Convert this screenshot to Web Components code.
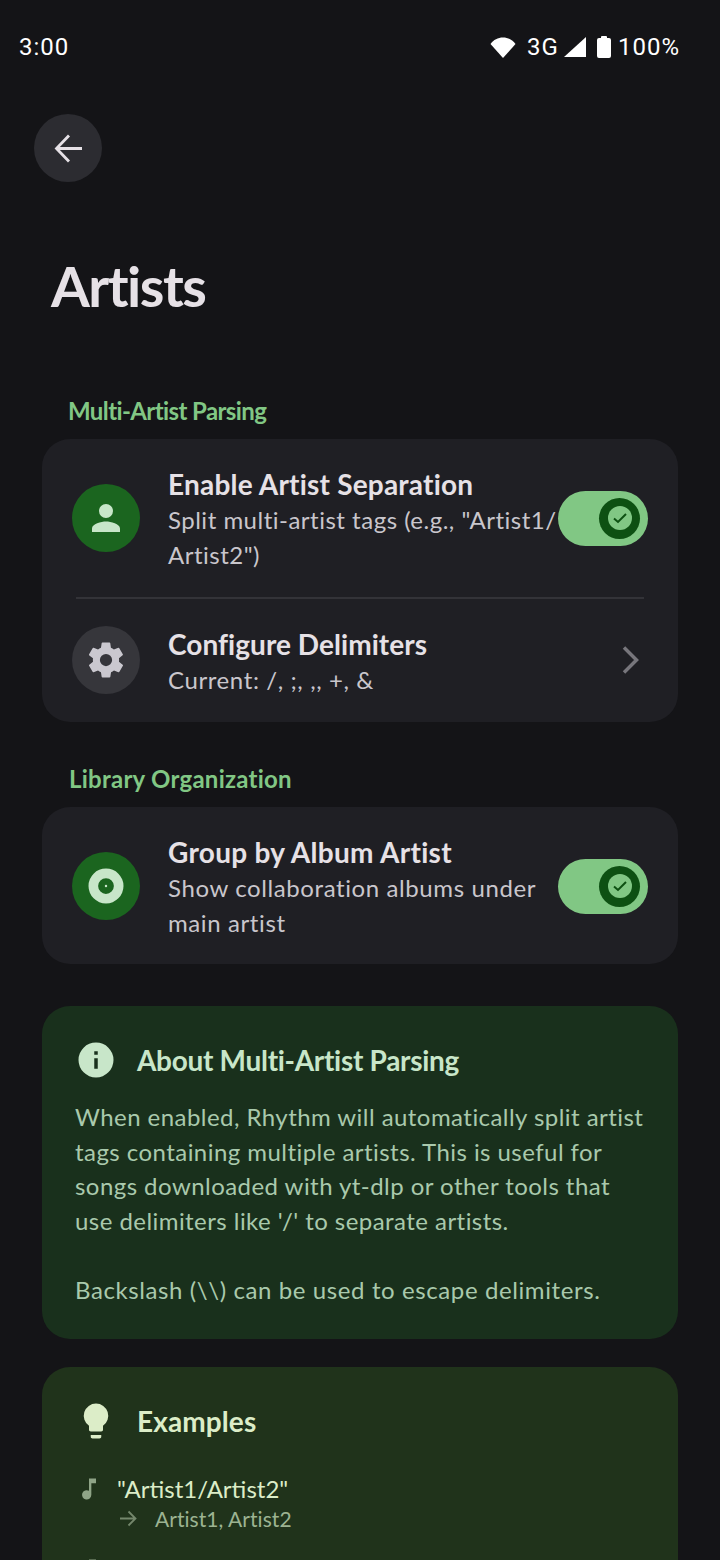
<!DOCTYPE html>
<html>
<head>
<meta charset="utf-8">
<style>
  html, body { margin: 0; padding: 0; background: #141417; }
  body { width: 720px; height: 1560px; overflow: hidden; font-family: Lato, "Noto Sans", sans-serif; }
</style>
</head>
<body>
<settings-page>
  <status-bar></status-bar>
  <back-button></back-button>
  <page-title>Artists</page-title>

  <section-label style="--label-left: 68px; --label-top: 76px; --label-ls: -.6px">Multi-Artist Parsing</section-label>
  <settings-card>
    <setting-row style="--row-pad: 27px 0 25px; --icon-up: 2px; --sub-ls: .5px" tone="green" icon="person" toggle title="Enable Artist Separation"
      subtitle="Split multi-artist tags (e.g., &quot;Artist1/&lt;wbr&gt;Artist2&quot;)"></setting-row>
    <div class="divider" style="height:2px;background:#333338;margin:0 4px"></div>
    <setting-row style="--row-pad: 27px 0 25px; --icon-up: 3px; --title-ls: .05px" tone="grey" icon="gear" chevron title="Configure Delimiters" subtitle="Current: /, ;, ,, +, &amp;"></setting-row>
  </settings-card>

  <section-label style="--label-left: 69px; --label-top: 41px; --label-ls: .25px">Library Organization</section-label>
  <settings-card>
    <setting-row style="--row-pad: 27px 0 24px; --icon-up: 2px; --title-ls: .3px" tone="green" icon="album" toggle title="Group by Album Artist"
      subtitle="Show collaboration albums under main artist"></setting-row>
  </settings-card>

  <info-card style="--card-bg: #19301c; --card-top: 42px; --head-color: #c8e6c9; --head-gap: 19px; --head-ls: -.3px; --text-color: #a9c9ac" icon="info" heading="About Multi-Artist Parsing">
    <p style="letter-spacing:.45px">When enabled, Rhythm will automatically split artist tags containing multiple artists. This is useful for songs downloaded with yt-dlp or other tools that use delimiters like '/' to separate artists.</p>
    <p>Backslash (\\) can be used to escape delimiters.</p>
  </info-card>

  <info-card style="--card-bg: #20331b; --card-top: 28px; --head-color: #dcedc8; --head-gap: 31px; --head-ls: .1px" icon="bulb" heading="Examples">
    <example-row from="&quot;Artist1/Artist2&quot;" to="Artist1, Artist2"></example-row>
    <example-row from="&quot;Artist1 &amp; Artist2&quot;" to="Artist1, Artist2"></example-row>
  </info-card>
</settings-page>

<script>
const ICONS = {
  person: '<path d="M12 12a4 4 0 1 0 0-8 4 4 0 0 0 0 8zm0 2c-2.7 0-8 1.300-8 4v2h16v-2c0-2.700-5.300-4-8-4z"/>',
  gear: '<path d="M19.400 13c.04-.33.06-.66.06-1s-.02-.67-.07-1l2.100-1.650a.5.5 0 0 0 .12-.64l-2-3.460a.5.5 0 0 0-.61-.22l-2.490 1a7.300 7.300 0 0 0-1.690-.98l-.38-2.650A.49.49 0 0 0 14 2h-4a.49.49 0 0 0-.49.42l-.38 2.650c-.61.25-1.170.59-1.690.98l-2.490-1a.5.5 0 0 0-.61.22l-2 3.460a.5.5 0 0 0 .12.64L4.570 11c-.05.33-.07.67-.07 1s.02.67.07 1l-2.110 1.650a.5.5 0 0 0-.12.64l2 3.460c.12.22.39.3.61.22l2.490-1c.52.39 1.080.73 1.690.98l.38 2.650c.06.24.27.42.49.42h4c.25 0 .46-.18.49-.42l.38-2.650c.61-.25 1.170-.59 1.690-.98l2.490 1c.23.09.49 0 .61-.22l2-3.460a.5.5 0 0 0-.12-.64L19.400 13zM12 15.500a3.500 3.500 0 1 1 0-7 3.500 3.500 0 0 1 0 7z"/>',
  album: '<path fill-rule="evenodd" d="M12 2a10 10 0 1 0 0 20 10 10 0 0 0 0-20zm0 5.500a4.500 4.500 0 1 1 0 9 4.500 4.500 0 0 1 0-9zm0 3.800a.7.7 0 1 0 0 1.400.7.7 0 0 0 0-1.400z"/>',
  info: '<path d="M12 2a10 10 0 1 0 0 20 10 10 0 0 0 0-20zm1 15h-2v-6h2v6zm0-8h-2V7h2v2z"/>',
  bulb: '<path d="M9 21c0 .55.45 1 1 1h4c.55 0 1-.45 1-1v-1H9v1zm3-19a7 7 0 0 0-4 12.740V17c0 .55.45 1 1 1h6c.55 0 1-.45 1-1v-2.260A7 7 0 0 0 12 2z"/>',
  note: '<path d="M12 3v10.550A4 4 0 1 0 14 17V7h4V3h-6z"/>'
};

class SettingsPage extends HTMLElement {
  constructor() {
    super();
    this.attachShadow({ mode: 'open' }).innerHTML = `
      <style>:host { display: block; padding: 0 42px; height: 1560px; overflow: hidden; }</style>
      <slot></slot>`;
  }
}

class StatusBar extends HTMLElement {
  constructor() {
    super();
    this.attachShadow({ mode: 'open' }).innerHTML = `
      <style>
        :host { display: flex; align-items: center; justify-content: space-between; height: 24px; margin: 35px -2px 0 -23px;
          color: #fff; font: 400 24px Roboto, sans-serif; letter-spacing: 1px; }
        .right { display: flex; align-items: center; }
        svg { display: block; fill: #fff; }
      </style>
      <span>3:00</span>
      <span class="right">
        <svg width="26" height="21" viewBox="0 0 26 21" style="margin-right:11px"><path d="M13 21 .5 7C3.500 2.800 8 .5 13 .5S22.500 2.800 25.500 7z"/></svg>
        <span>3G</span>
        <svg width="22" height="20" viewBox="0 0 22 20" style="margin:0 11px 0 5px"><path d="M22 0v20H0z"/></svg>
        <svg width="14" height="22" viewBox="0 0 14 22" style="margin-right:7px"><path d="M4 2V1a1 1 0 0 1 1-1h4a1 1 0 0 1 1 1v1h2a2 2 0 0 1 2 2v16a2 2 0 0 1-2 2H2a2 2 0 0 1-2-2V4a2 2 0 0 1 2-2z"/></svg>
        <span>100%</span>
      </span>`;
  }
}

class BackButton extends HTMLElement {
  constructor() {
    super();
    this.attachShadow({ mode: 'open' }).innerHTML = `
      <style>
        :host { display: flex; align-items: center; justify-content: center; width: 68px; height: 68px; margin: 55px 0 0 -8px;
          border-radius: 50%; background: #2c2c31; }
        svg { fill: none; stroke: #e6e1e6; stroke-width: 2.800; }
      </style>
      <svg width="32" height="32" viewBox="0 0 32 32"><path d="M30 16.500H5M17 3.500 4.500 16.500 17 29.500"/></svg>`;
  }
}

class PageTitle extends HTMLElement {
  constructor() {
    super();
    this.attachShadow({ mode: 'open' }).innerHTML = `
      <style>:host { display: block; margin: 71px 0 0 9px; color: #e6e1e6; font-size: 56px; line-height: 66px; font-weight: 700; letter-spacing: -1.500px; }</style>
      <slot></slot>`;
  }
}

class SectionLabel extends HTMLElement {
  constructor() {
    super();
    this.attachShadow({ mode: 'open' }).innerHTML = `
      <style>
        :host { display: block; margin: var(--label-top) 0 12px calc(var(--label-left) - 42px); color: #81c784;
          font-size: 24px; line-height: 32px; font-weight: 700; letter-spacing: var(--label-ls); }
      </style>
      <slot></slot>`;
  }
}

class SettingsCard extends HTMLElement {
  constructor() {
    super();
    this.attachShadow({ mode: 'open' }).innerHTML = `
      <style>
        :host { display: block; background: #1f1f24; border-radius: 28px; padding: 0 30px; }
      </style>
      <slot></slot>`;
  }
}

class SettingRow extends HTMLElement {
  connectedCallback() {
    if (this.shadowRoot) return;
    const tone = this.getAttribute('tone');
    const bg = tone === 'green' ? '#1b651f' : '#36363b';
    const fg = tone === 'green' ? '#c8e6c9' : '#cac8cf';
    let end = '';
    if (this.hasAttribute('toggle')) end = '<toggle-switch></toggle-switch>';
    if (this.hasAttribute('chevron')) end = `<svg class="chev" width="18" height="30" viewBox="0 0 18 30"><path d="M2 2.500 14.500 15 2 27.500" fill="none" stroke="#77767c" stroke-width="3.500"/></svg>`;
    this.attachShadow({ mode: 'open' }).innerHTML = `
      <style>
        :host { display: flex; align-items: center; padding: var(--row-pad); }
        .icon { flex: none; width: 68px; height: 68px; border-radius: 50%; background: ${bg}; display: flex; align-items: center; justify-content: center; margin: 0 28px var(--icon-up, 0) 0; }
        .icon svg { fill: ${fg}; }
        .text { flex: 1; min-width: 0; }
        .title { color: #e6e1e6; font-size: 28px; line-height: 36px; font-weight: 700; letter-spacing: var(--title-ls, .2px); }
        .sub { color: #c9c6cc; font-size: 24px; line-height: 35px; letter-spacing: var(--sub-ls, .6px); }
        .chev { flex: none; margin: 0 8px var(--icon-up, 0) 0; }
        toggle-switch { margin-bottom: var(--icon-up, 0); }
      </style>
      <div class="icon"><svg width="42" height="42" viewBox="0 0 24 24">${ICONS[this.getAttribute('icon')]}</svg></div>
      <div class="text">
        <div class="title">${this.getAttribute('title')}</div>
        <div class="sub">${this.getAttribute('subtitle')}</div>
      </div>
      ${end}`;
  }
}

class ToggleSwitch extends HTMLElement {
  constructor() {
    super();
    this.attachShadow({ mode: 'open' }).innerHTML = `
      <style>
        :host { flex: none; display: flex; align-items: center; justify-content: flex-end; width: 90px; height: 55px; box-sizing: border-box; padding-right: 8px; border-radius: 28px; background: #81c784; }
        .thumb { width: 41px; height: 41px; border-radius: 50%; background: #0d5012; display: flex; align-items: center; justify-content: center; }
        .inner { width: 24px; height: 24px; border-radius: 50%; background: #81c784; display: flex; align-items: center; justify-content: center; }
        svg { fill: none; stroke: #0d5012; stroke-width: 2; }
      </style>
      <div class="thumb"><div class="inner"><svg width="16" height="16" viewBox="0 0 16 16"><path d="M2 8.500 6 12l8-8"/></svg></div></div>`;
  }
}

class InfoCard extends HTMLElement {
  constructor() {
    super();
    const icon = this.getAttribute('icon');
    this.attachShadow({ mode: 'open' }).innerHTML = `
      <style>
        :host { display: block; margin-top: var(--card-top); background: var(--card-bg); border-radius: 28px; padding: 33px 33px 31px; }
        .head { display: flex; align-items: center; gap: 20px; color: var(--head-color); margin-bottom: var(--head-gap); }
        .head svg { fill: var(--head-color); flex: none; }
        h2 { margin: 0; font-size: 28px; line-height: 42px; font-weight: 700; letter-spacing: var(--head-ls); }
        ::slotted(p) { margin: 0 0 35px; color: var(--text-color); font-size: 24px; line-height: 34.600px; letter-spacing: .6px; }
        ::slotted(p:last-child) { margin-bottom: 0; }
      </style>
      <div class="head"><svg width="42" height="42" viewBox="0 0 24 24">${ICONS[icon]}</svg><h2>${this.getAttribute('heading')}</h2></div>
      <slot></slot>`;
  }
}

class ExampleRow extends HTMLElement {
  constructor() {
    super();
    this.attachShadow({ mode: 'open' }).innerHTML = `
      <style>
        :host { display: grid; grid-template-columns: 28px 1fr; column-gap: 14px; margin-bottom: 21px; }
        .note { fill: #8fa487; margin-top: 2px; }
        .from { color: #dcedc8; font-size: 24px; line-height: 32px; }
        .to { color: #9cb392; font-size: 21px; line-height: 28px; letter-spacing: .05px; display: flex; align-items: center; gap: 18px; padding-left: 3px; }
        .to svg { fill: none; stroke: #74876c; stroke-width: 1.800; }
      </style>
      <svg class="note" width="28" height="28" viewBox="0 0 24 24">${ICONS.note}</svg>
      <div>
        <div class="from">${this.getAttribute('from')}</div>
        <div class="to"><svg width="17" height="17" viewBox="0 0 17 17"><path d="M0 8.500h15.500M8.500 1.500l7 7-7 7"/></svg><span>${this.getAttribute('to')}</span></div>
      </div>`;
  }
}

customElements.define('settings-page', SettingsPage);
customElements.define('status-bar', StatusBar);
customElements.define('back-button', BackButton);
customElements.define('page-title', PageTitle);
customElements.define('section-label', SectionLabel);
customElements.define('settings-card', SettingsCard);
customElements.define('setting-row', SettingRow);
customElements.define('toggle-switch', ToggleSwitch);
customElements.define('info-card', InfoCard);
customElements.define('example-row', ExampleRow);
</script>
</body>
</html>
